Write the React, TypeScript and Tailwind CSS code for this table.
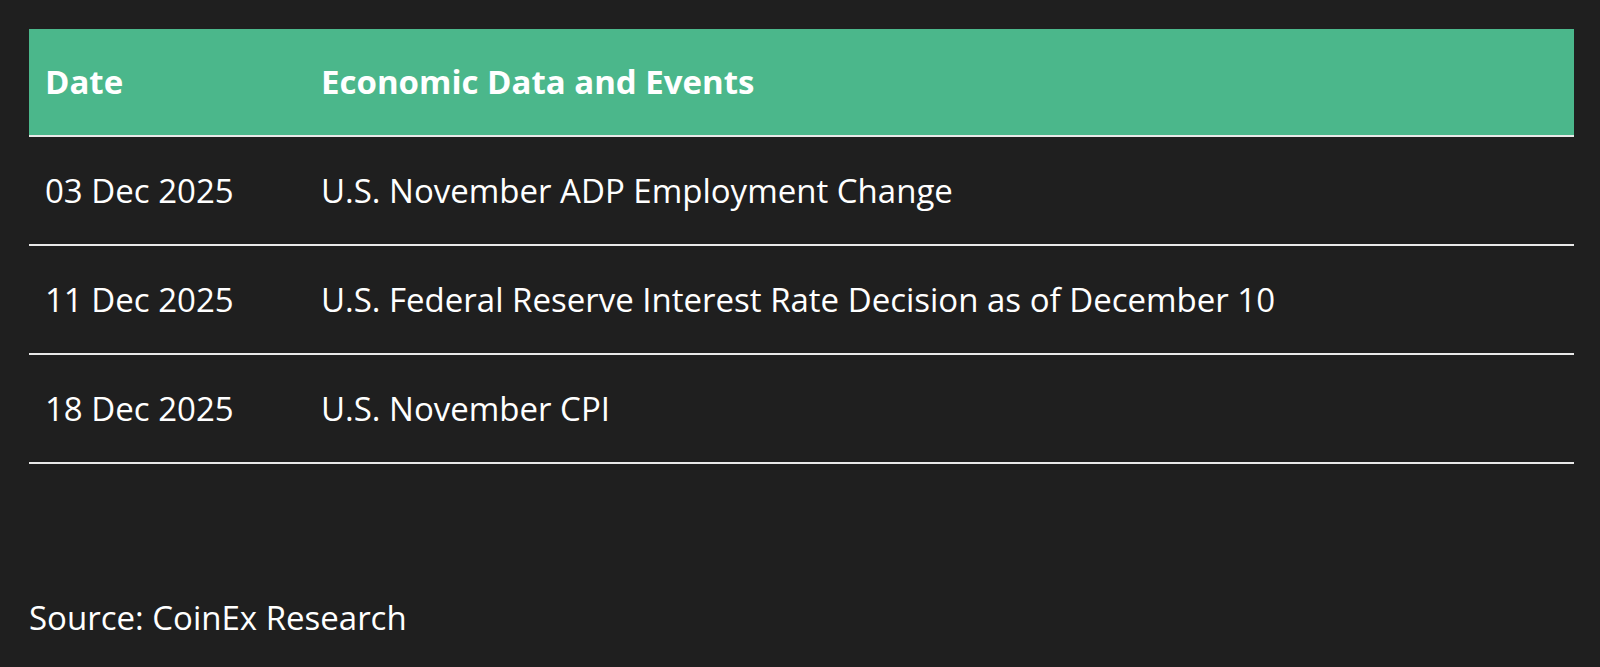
import React from 'react';

const rows = [
  { date: '03 Dec 2025', event: 'U.S. November ADP Employment Change' },
  { date: '11 Dec 2025', event: 'U.S. Federal Reserve Interest Rate Decision as of December 10' },
  { date: '18 Dec 2025', event: 'U.S. November CPI' },
];

export default function App() {
  return (
    <div
      className="min-h-screen bg-[#1f1f1f] pt-[29px] pl-[29px] pr-[26px] text-white"
      style={{ fontFamily: '"Open Sans", "Noto Sans", sans-serif' }}
    >
      <table className="w-full border-collapse text-left">
        <thead>
          <tr className="h-[107px] bg-[#4bb78b] border-b-2 border-[#e8e8e8]">
            <th className="w-[276px] pl-4 text-[33px] font-bold">Date</th>
            <th className="pl-4 text-[33px] font-bold">Economic Data and Events</th>
          </tr>
        </thead>
        <tbody>
          {rows.map((row) => (
            <tr key={row.date} className="h-[109px] border-b-2 border-[#e8e8e8]">
              <td className="pl-4 text-[33px] font-normal">{row.date}</td>
              <td className="pl-4 text-[33px] font-normal">{row.event}</td>
            </tr>
          ))}
        </tbody>
      </table>
      <p className="mt-[134px] text-[33px] leading-10">Source: CoinEx Research</p>
    </div>
  );
}
